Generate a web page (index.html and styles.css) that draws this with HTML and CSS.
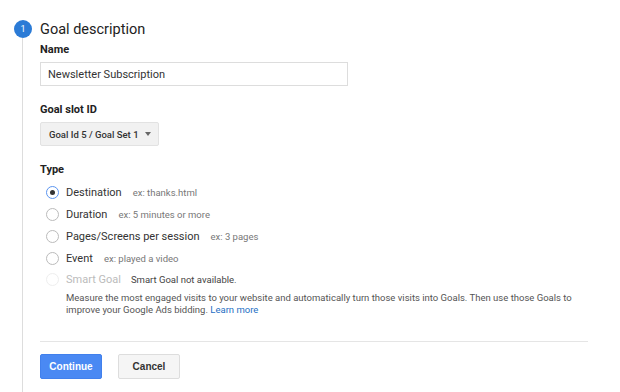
FILE: index.html
```html
<!DOCTYPE html>
<html lang="en">
<head>
    <meta charset="UTF-8">
    <title>Goal setup</title>
    <link rel="stylesheet" href="styles.css">
</head>
<body>
    <div class="step">
        <div class="step-rail">
            <div class="step-num">1</div>
            <div class="step-line"></div>
        </div>
        <div class="step-body">
            <h2>Goal description</h2>

            <div class="field">
                <label class="field-label" for="goal_name">Name</label>
                <input class="text-input" type="text" id="goal_name" value="Newsletter Subscription">
            </div>

            <div class="field">
                <div class="field-label">Goal slot ID</div>
                <div class="dropdown">Goal Id 5 / Goal Set 1 <span class="caret"></span></div>
            </div>

            <div class="field type-field">
                <div class="field-label">Type</div>
                <div class="radio-row">
                    <span class="radio checked"></span>
                    <span class="radio-name">Destination</span>
                    <span class="radio-hint">ex: thanks.html</span>
                </div>
                <div class="radio-row">
                    <span class="radio"></span>
                    <span class="radio-name">Duration</span>
                    <span class="radio-hint">ex: 5 minutes or more</span>
                </div>
                <div class="radio-row">
                    <span class="radio"></span>
                    <span class="radio-name">Pages/Screens per session</span>
                    <span class="radio-hint">ex: 3 pages</span>
                </div>
                <div class="radio-row">
                    <span class="radio"></span>
                    <span class="radio-name">Event</span>
                    <span class="radio-hint">ex: played a video</span>
                </div>
                <div class="radio-row disabled">
                    <span class="radio"></span>
                    <span class="radio-name">Smart Goal</span>
                    <span class="radio-note">Smart Goal not available.</span>
                </div>
                <p class="smart-desc">Measure the most engaged visits to your website and automatically turn those visits into Goals. Then use those Goals to improve your Google Ads bidding. <a href="#">Learn more</a></p>
            </div>

            <div class="actions">
                <button class="btn btn-primary">Continue</button>
                <button class="btn">Cancel</button>
            </div>
        </div>
    </div>
</body>
</html>
```

FILE: styles.css
```css
body {
    margin: 0;
    font-family: Roboto, "Liberation Sans", Arial, sans-serif;
    color: #333;
    background: #fff;
}
.step {
    display: flex;
    padding-top: 20px;
    height: 372px;
}
.step-rail {
    width: 40px;
    padding-left: 14px;
    box-sizing: border-box;
    display: flex;
    flex-direction: column;
}
.step-num {
    width: 18px;
    height: 18px;
    border-radius: 50%;
    background-color: #2b7bd6;
    color: #fff;
    font-size: 9px;
    line-height: 18px;
    text-align: center;
}
.step-line {
    flex: 1;
    width: 1px;
    margin-left: 8px;
    background-color: #ddd;
}
.step-body {
    width: 548px;
}
h2 {
    margin: 0;
    font-size: 14.5px;
    font-weight: normal;
    line-height: 20px;
    color: #222;
}
.field {
    margin-top: 3px;
}
.field + .field {
    margin-top: 17px;
}
.field-label {
    display: block;
    font-size: 11px;
    font-weight: bold;
    line-height: 14px;
    margin-bottom: 5px;
    color: #222;
}
.text-input {
    width: 308px;
    height: 24px;
    box-sizing: border-box;
    border: 1px solid #ddd;
    padding: 0 7px;
    font-family: Roboto, "Liberation Sans", Arial, sans-serif;
    font-size: 11px;
    color: #333;
    outline: none;
}
.dropdown {
    display: inline-flex;
    align-items: center;
    height: 24px;
    box-sizing: border-box;
    padding: 0 7px 0 8px;
    background-color: #f1f1f1;
    border: 1px solid #e2e2e2;
    border-radius: 2px;
    font-size: 9.5px;
    font-weight: 500;
    color: #333;
}
.caret {
    margin-left: 6px;
    border-left: 3.5px solid transparent;
    border-right: 3.5px solid transparent;
    border-top: 4px solid #666;
}
.type-field .field-label {
    margin-bottom: 5px;
}
.radio-row {
    display: flex;
    align-items: center;
    height: 21.75px;
    padding-left: 6px;
}
.radio {
    width: 13px;
    height: 13px;
    box-sizing: border-box;
    border: 1px solid #bbb;
    border-radius: 50%;
    margin-right: 7px;
    display: flex;
    align-items: center;
    justify-content: center;
}
.radio.checked {
    border-color: #5b95f0;
}
.radio.checked::after {
    content: "";
    width: 5px;
    height: 5px;
    border-radius: 50%;
    background-color: #333;
}
.radio-name {
    font-size: 11px;
    color: #333;
}
.radio-hint {
    margin-left: 11px;
    font-size: 9.5px;
    color: #777;
}
.disabled .radio {
    border-color: #eee;
}
.disabled .radio-name {
    color: #bbb;
}
.radio-note {
    margin-left: 10px;
    font-size: 9.5px;
    color: #444;
}
.smart-desc {
    margin: 1px 0 0 26px;
    font-size: 9.5px;
    line-height: 12px;
    color: #555;
}
.smart-desc a {
    color: #1e6fc4;
    text-decoration: none;
}
.actions {
    border-top: 1px solid #e5e5e5;
    margin-top: 25px;
    padding-top: 12px;
    display: flex;
    gap: 16px;
}
.btn {
    width: 62px;
    height: 25px;
    border: 1px solid #ddd;
    border-radius: 2px;
    background-color: #f5f5f5;
    font-family: "Liberation Sans", Arial, sans-serif;
    font-size: 10px;
    font-weight: bold;
    color: #333;
    cursor: pointer;
}
.btn-primary {
    background-color: #4a89f3;
    border-color: #4180ec;
    color: #fff;
}
```
